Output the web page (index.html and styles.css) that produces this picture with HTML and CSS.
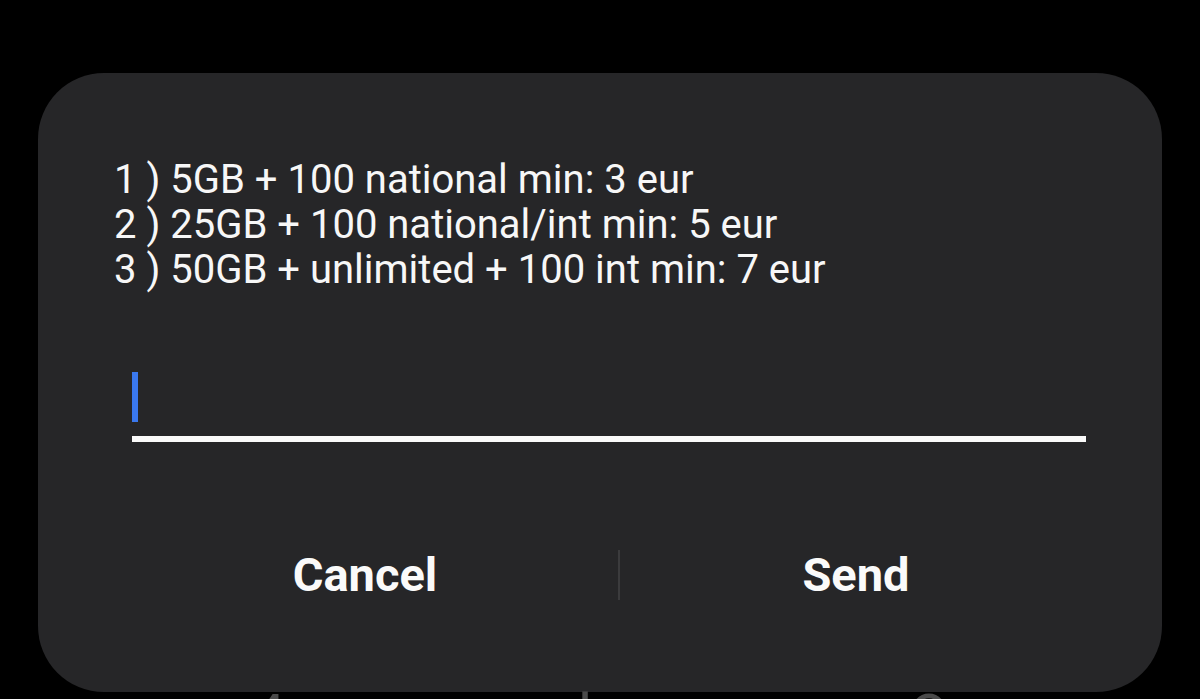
FILE: index.html
```html
<!DOCTYPE html>
<html>
<head>
<meta charset="utf-8">
<link rel="stylesheet" href="styles.css">
</head>
<body>
<div class="dialog">
  <div class="message">
    <div>1 ) 5GB + 100 national min: 3 eur</div>
    <div>2 ) 25GB + 100 national/int min: 5 eur</div>
    <div>3 ) 50GB + unlimited + 100 int min: 7 eur</div>
  </div>
  <div class="field"><span class="cursor"></span></div>
  <div class="actions">
    <div class="btn">Cancel</div>
    <div class="divider"></div>
    <div class="btn">Send</div>
  </div>
</div>
<div class="peek">
  <span class="g1">4</span>
  <span class="g2">l</span>
  <span class="g3">O</span>
</div>
</body>
</html>
```

FILE: styles.css
```css
html, body {
  margin: 0;
  padding: 0;
  background: #000;
  height: 100%;
  overflow: hidden;
}
body {
  font-family: Roboto, "Liberation Sans", sans-serif;
  color: #fff;
}
.dialog {
  box-sizing: border-box;
  width: 1124px;
  height: 619px;
  margin: 73px 0 0 38px;
  background: #262628;
  border-radius: 66px;
  padding-top: 84px;
}
.message {
  padding-left: 76px;
  font-size: 40px;
  line-height: 45px;
  color: #f7f7f7;
}
.field {
  margin: 80px 76px 0 94px;
  height: 64px;
  border-bottom: 6px solid #fafafa;
}
.cursor {
  display: block;
  width: 6px;
  height: 50px;
  background: #3a78ee;
}
.actions {
  display: grid;
  grid-template-columns: 506px 2px 472px;
  align-items: center;
  margin: 108px 0 0 74px;
  height: 50px;
}
.btn {
  text-align: center;
  font-size: 47px;
  line-height: 50px;
  font-weight: 700;
  color: #fafafa;
}
.divider {
  width: 2px;
  height: 50px;
  background: #3b3b3d;
}
.peek {
  display: flex;
  margin-top: 2px;
  font-size: 60px;
  line-height: 44px;
  color: #4a4a4a;
}
.g1 { margin-left: 252px; }
.g2 { margin-left: 292px; }
.g3 { margin-left: 316px; }
```
